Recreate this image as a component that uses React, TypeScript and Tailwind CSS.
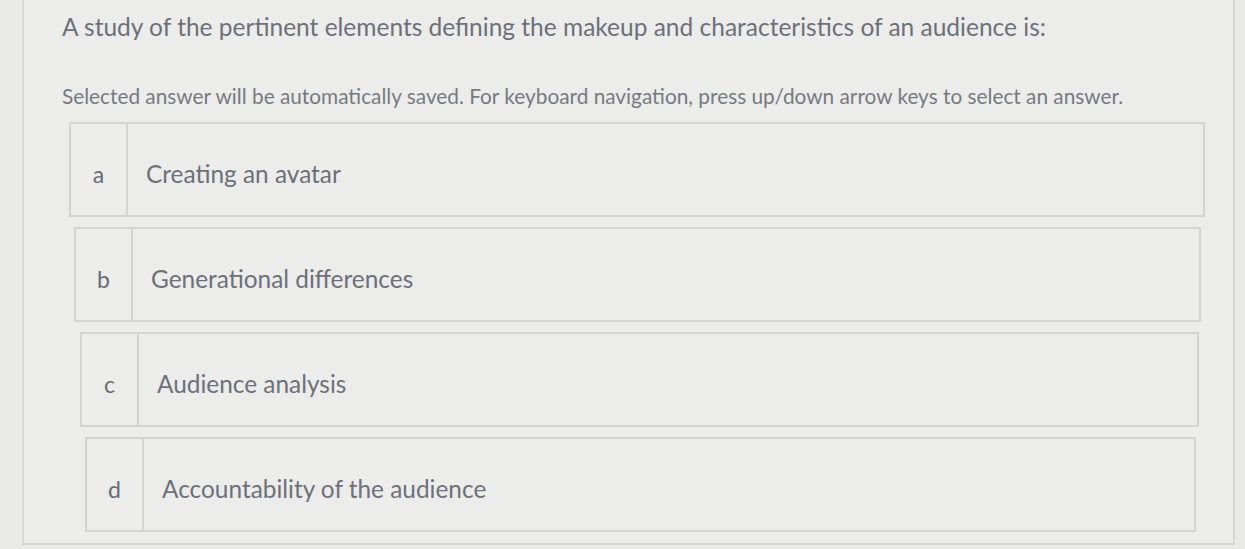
import React from 'react'

const options = [
  { key: 'a', text: 'Creating an avatar', shift: 'ml-0 mr-[28px]' },
  { key: 'b', text: 'Generational differences', shift: 'ml-[5px] mr-[32px]' },
  { key: 'c', text: 'Audience analysis', shift: 'ml-[11px] mr-[34px]' },
  { key: 'd', text: 'Accountability of the audience', shift: 'ml-[16px] mr-[37px]' },
]

export default function App() {
  return (
    <div className="w-[1245px] h-[549px] overflow-hidden bg-[#e9e9e8] font-['Lato',sans-serif]">
      <div className="ml-[22px] mr-[10px] h-[545px] border-l-2 border-r-2 border-b-2 border-[#d6d6d5] bg-[#ececeb] pl-[38px] pt-[11px]">
        <h1 className="text-[24.5px] leading-[32px] text-[#6c707a]">
          A study of the pertinent elements defining the makeup and characteristics of an audience is:
        </h1>
        <p className="mt-[40px] text-[20.8px] leading-[26px] text-[#767a82]">
          Selected answer will be automatically saved. For keyboard navigation, press up/down arrow keys to select an answer.
        </p>

        <div className="mt-[13px] ml-[7px] flex flex-col gap-[10px]">
          {options.map((o) => (
            <div key={o.key} className={`flex h-[95px] border-2 border-[#d3d3d2] ${o.shift}`}>
              <div className="w-[57px] flex items-center justify-center border-r-2 border-[#d3d3d2] pt-[10px] text-[23px] text-[#666a74]">
                {o.key}
              </div>
              <div className="flex items-center pl-[18px] pt-[10px] text-[24.4px] text-[#6c707a]">{o.text}</div>
            </div>
          ))}
        </div>
      </div>
    </div>
  )
}
